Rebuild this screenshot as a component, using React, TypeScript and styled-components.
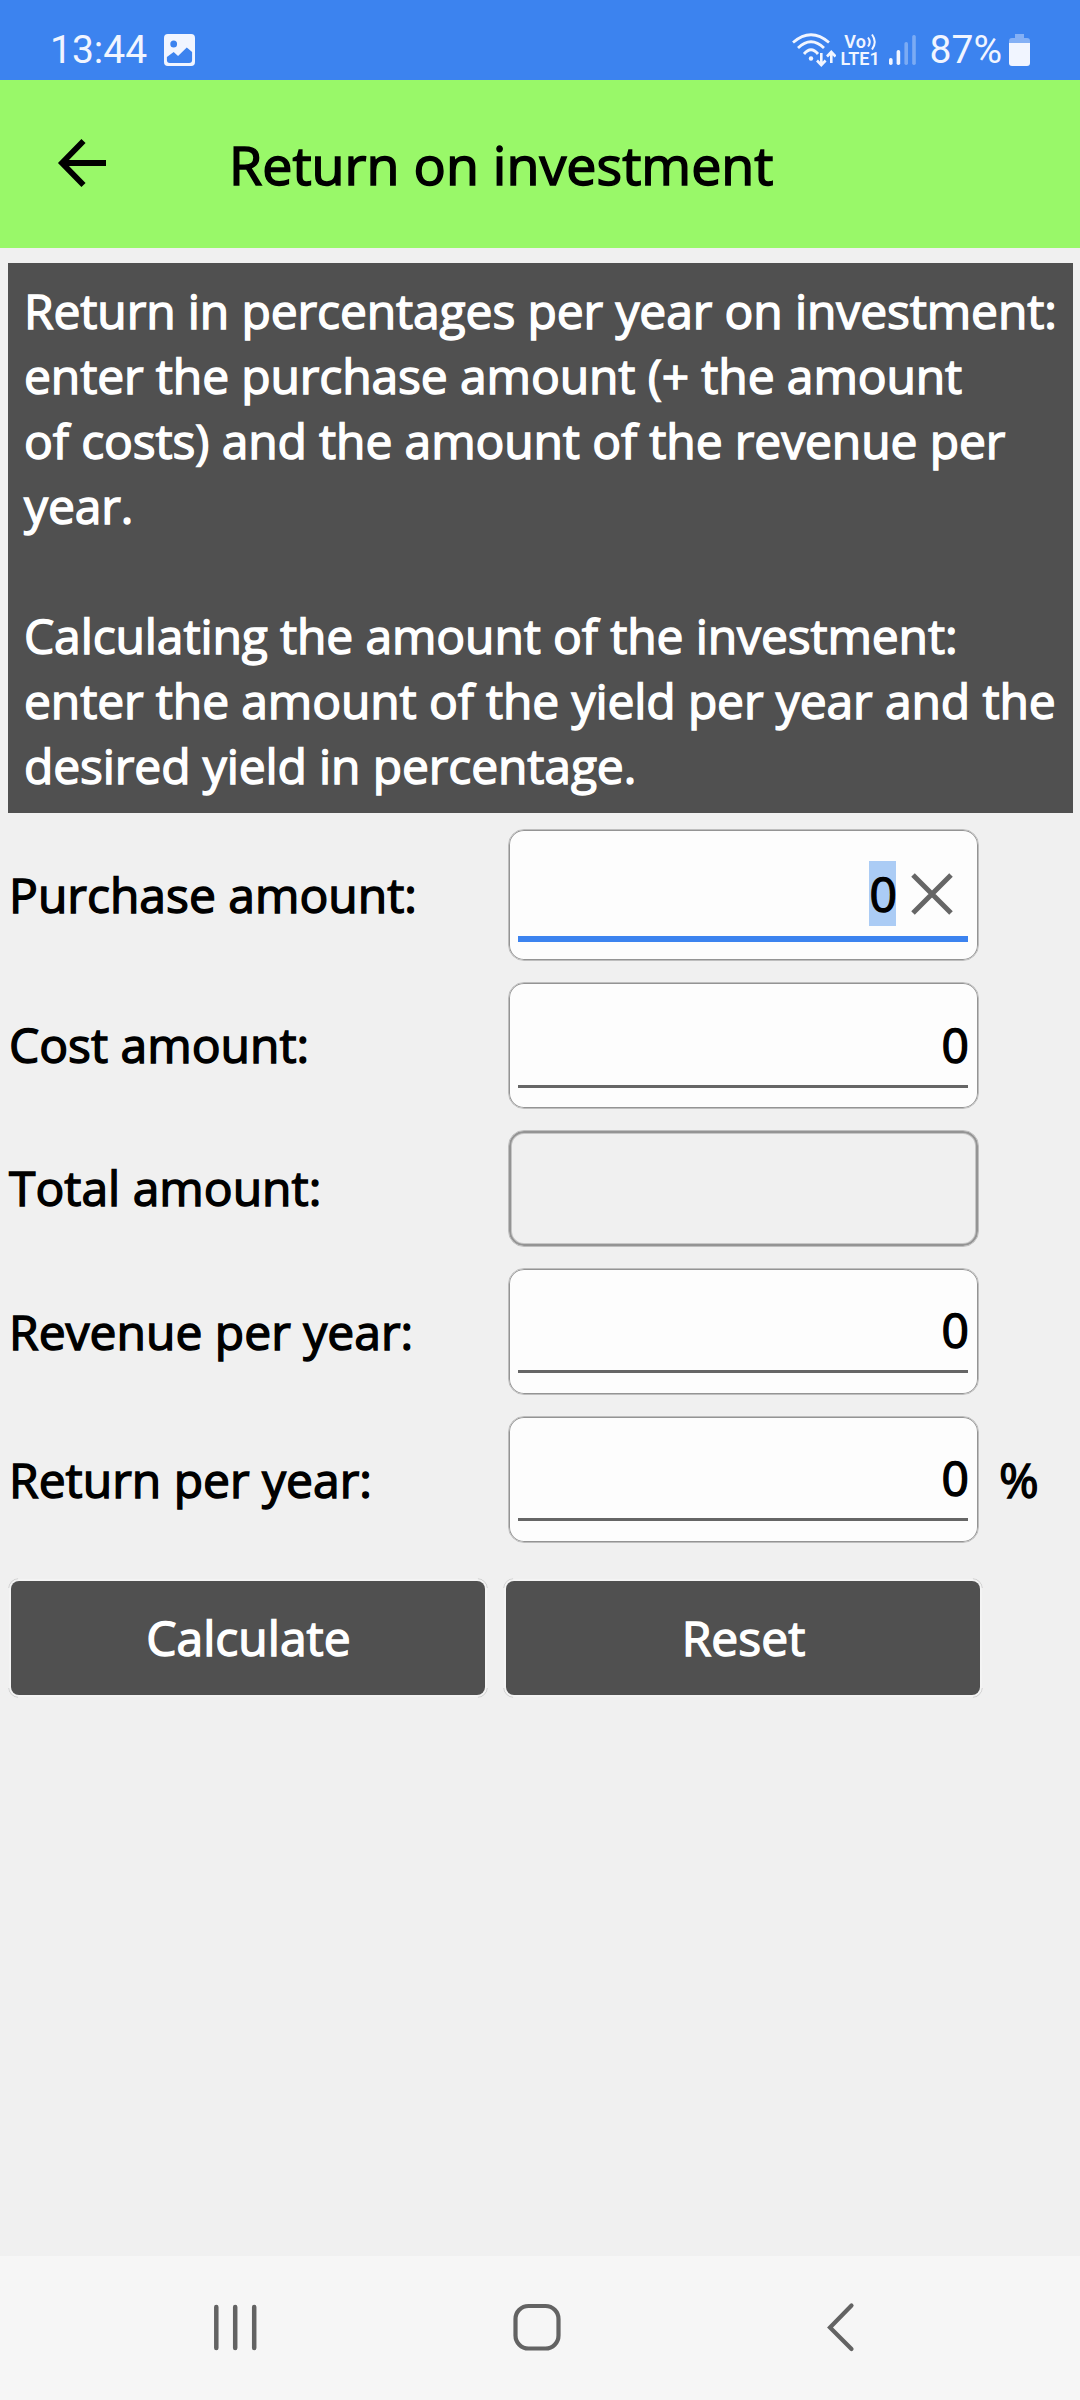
import React from "react";
import styled, { createGlobalStyle } from "styled-components";

const GlobalStyle = createGlobalStyle`
  * { box-sizing: border-box; }
  html, body { margin: 0; padding: 0; background: #f0f0f0; }
  body { font-family: "Open Sans", "Noto Sans", sans-serif; overflow: hidden; }
  button { font: inherit; border: 0; margin: 0; padding: 0; outline: 0; }
  svg { display: block; flex: none; }
`;

const Screen = styled.div`
  width: 1080px;
  height: 2400px;
  display: flex;
  flex-direction: column;
  background: #f0f0f0;
  color: #000;
`;

const StatusBar = styled.header`
  height: 80px;
  padding: 18px 50px 0 50px;
  display: flex;
  justify-content: space-between;
  background: #3c83ef;
  color: #f1f5ff;
  font-family: Roboto, sans-serif;
  font-weight: 400;
`;

const StatusGroup = styled.div`
  height: 63px;
  display: flex;
  align-items: center;
`;

const StatusText = styled.span<{ $gap: number }>`
  font-size: 39px;
  line-height: 62px;
  margin-right: ${(p) => p.$gap}px;
`;

const Carrier = styled.div`
  width: 39px;
  margin: 0 9px 0 5px;
  display: flex;
  flex-direction: column;
  align-items: center;
  font-weight: 600;
  font-size: 18px;
  line-height: 17px;
`;

const CarrierTop = styled.div`
  display: flex;
  align-items: center;
  gap: 1px;
`;

const TitleBar = styled.div`
  height: 168px;
  padding-left: 54px;
  display: flex;
  align-items: center;
  background: #99f869;
`;

const BackButton = styled.button`
  width: 56px;
  height: 56px;
  margin: 0 119px 2px 0;
  background: none;
  color: inherit;
`;

const Title = styled.h1`
  margin: 0;
  font-size: 53.8px;
  line-height: 72px;
  font-weight: 400;
  white-space: nowrap;
  -webkit-text-stroke: 1.5px currentColor;
`;

const Content = styled.main`
  flex: 1;
  padding: 15px 7px 0 8px;
  display: flex;
  flex-direction: column;
  font-size: 48px;
  -webkit-text-stroke: 1.4px currentColor;
`;

const Notice = styled.section`
  height: 550px;
  padding: 15px 0 0 16px;
  background: #505050;
  color: #fff;
  line-height: 65px;
  letter-spacing: -0.12px;
  white-space: pre;
`;

const Form = styled.form`
  margin-top: 16px;
  display: flex;
  flex-direction: column;
  gap: 21px;
`;

const Row = styled.div<{ $height: number }>`
  height: ${(p) => p.$height}px;
  display: flex;
  align-items: center;
`;

const Label = styled.label<{ $raised?: boolean }>`
  width: 500px;
  padding: 0 0 ${(p) => (p.$raised ? 2 : 0)}px 1px;
  line-height: 66px;
  white-space: nowrap;
`;

const Field = styled.div<{ $readOnly?: boolean }>`
  width: 471px;
  height: 100%;
  padding: 0 10px 0 9px;
  display: flex;
  flex-direction: column;
  justify-content: flex-end;
  border: 1px solid #bebebe;
  border-radius: 16px;
  background: ${(p) => (p.$readOnly ? "#f0f0f0" : "#fdfdfd")};
  box-shadow: ${(p) =>
    p.$readOnly ? "inset 0 0 0 2px #949494, inset 0 0 0 3px #c6c6c6" : "inset 0 0 0 1px #949494"};
`;

const ValueLine = styled.div<{ $focused?: boolean; $lift: number }>`
  display: flex;
  justify-content: flex-end;
  padding-bottom: ${(p) => (p.$focused ? 10 : 8)}px;
  margin-bottom: ${(p) => p.$lift}px;
  border-bottom: ${(p) => (p.$focused ? "6px solid #3c83ef" : "3px solid #666")};
`;

const Value = styled.span<{ $selected?: boolean }>`
  width: 27px;
  line-height: 65px;
  text-indent: 0.5px;
  background: ${(p) => (p.$selected ? "#abccf5" : "transparent")};
`;

const ClearButton = styled.button`
  width: 72px;
  height: 65px;
  padding: 12px 0 0 15px;
  display: flex;
  align-items: flex-start;
  background: none;
  color: #666;
`;

const Unit = styled.span`
  margin-left: 20px;
  line-height: 66px;
`;

const Actions = styled.div`
  margin: 17px 0 0 3px;
  display: flex;
  gap: 21px;
`;

const Action = styled.button`
  position: relative;
  width: 474px;
  height: 114px;
  padding-left: 1px;
  border-radius: 8px;
  background: #505050;
  color: #fff;
  line-height: 66px;
  box-shadow: 0 0 0 2px #f4f4f4;

  &::before {
    content: "";
    position: absolute;
    inset: -3px;
    border: 1px solid #cfcfcf;
    border-radius: 11px;
    mask-image: linear-gradient(90deg, #000 10px, transparent 10px calc(100% - 10px), #000 0),
      linear-gradient(#000 10px, transparent 10px calc(100% - 10px), #000 0);
    mask-composite: intersect;
  }
`;

const NavBar = styled.nav`
  height: 144px;
  padding: 0 0 2px 213px;
  display: flex;
  align-items: center;
  background: #f6f6f6;
  color: #636363;
`;

const NavButton = styled.button<{ $gap: number }>`
  margin-right: ${(p) => p.$gap}px;
  background: none;
  color: inherit;
`;

const PictureIcon = () => (
  <svg width="31" height="32" viewBox="0 0 32 32" preserveAspectRatio="none">
    <path
      fillRule="evenodd"
      fill="currentColor"
      d="M4 0h24a4 4 0 0 1 4 4v24a4 4 0 0 1-4 4H4a4 4 0 0 1-4-4V4a4 4 0 0 1 4-4zM10 6.500a3.500 3.500 0 1 0 0 7a3.500 3.500 0 0 0 0-7zM3 23v3a3 3 0 0 0 3 3h20a3 3 0 0 0 3-3v-8l-5.500-4.500l-9 8.500l-4.500-4z"
    />
  </svg>
);

const WifiIcon = () => (
  <svg width="44" height="34" viewBox="0 0 44 34" fill="none" stroke="currentColor" strokeWidth="2.800">
    <path d="M1 9.500Q19 -6 37 9.500M6 15Q19 2.500 32 15M12 21Q19 12.500 26 21" />
    <circle cx="19" cy="25.500" r="2.200" fill="currentColor" stroke="none" />
    <path strokeWidth="2.600" d="M29.300 20v12M25 27.500l4.300 4.500l4.300-4.500M39.300 30v-11M35 23.500l4.300-4.500l4.300 4.500" />
  </svg>
);

const VoiceWaves = () => (
  <svg width="9" height="17" viewBox="0 0 9 17" fill="none" stroke="currentColor" strokeWidth="2">
    <path d="M1 4.500Q4.500 9 1 13.500M5 1.500Q10.500 9 5 16.500" />
  </svg>
);

const SignalIcon = () => (
  <svg width="41" height="30" viewBox="0 0 41 30" fill="currentColor">
    <rect y="23" width="3.600" height="7" rx="1.700" />
    <rect x="7.600" y="15" width="3.600" height="15" rx="1.700" />
    <rect x="15.400" y="7" width="3.600" height="23" rx="1.700" opacity=".35" />
    <rect x="23.200" y="0" width="3.600" height="30" rx="1.700" opacity=".35" />
  </svg>
);

const BatteryIcon = () => (
  <svg width="21" height="32" viewBox="0 0 21 32" fill="currentColor">
    <path opacity=".4" d="M6 0h9v4h3a3 3 0 0 1 3 3v2H0V7a3 3 0 0 1 3-3h3z" />
    <path d="M0 9h21v20a3 3 0 0 1-3 3H3a3 3 0 0 1-3-3z" />
  </svg>
);

const BackArrow = () => (
  <svg width="56" height="56" viewBox="0 0 56 56" fill="none" stroke="currentColor" strokeWidth="5.800">
    <path d="M29.500 6L8 28l21.500 22M8.500 28h43.500" />
  </svg>
);

const ClearIcon = () => (
  <svg width="42" height="42" viewBox="0 0 42 42" fill="none" stroke="currentColor" strokeWidth="5">
    <path d="M2 2l38 38M40 2L2 40" />
  </svg>
);

const RecentsIcon = () => (
  <svg width="44" height="48" viewBox="0 0 44 48" stroke="currentColor" strokeWidth="4.500" strokeLinecap="round">
    <path d="M3.300 4v41M22.200 4v41M41.200 4v41" />
  </svg>
);

const HomeIcon = () => (
  <svg width="48" height="48" viewBox="0 0 48 48" fill="none" stroke="currentColor" strokeWidth="4.200">
    <rect x="2.500" y="3" width="43" height="42.500" rx="13" />
  </svg>
);

const NavBackIcon = () => (
  <svg width="30" height="50" viewBox="0 0 30 50" fill="none" stroke="currentColor" strokeWidth="4.200" strokeLinecap="round">
    <path d="M25.500 3.500L4 25.500L25.500 47" />
  </svg>
);

type RowSpec = {
  label: string;
  height: number;
  lift: number;
  raised?: boolean;
  value?: string;
  focused?: boolean;
  unit?: string;
};

const rows: RowSpec[] = [
  { label: "Purchase amount:", height: 132, lift: 18, value: "0", focused: true },
  { label: "Cost amount:", height: 127, lift: 20, value: "0", raised: true },
  { label: "Total amount:", height: 117, lift: 0, raised: true },
  { label: "Revenue per year:", height: 127, lift: 21, value: "0" },
  { label: "Return per year:", height: 127, lift: 21, value: "0", unit: "%" },
];

const notice = `Return in percentages per year on investment:
enter the purchase amount (+ the amount
of costs) and the amount of the revenue per
year.

Calculating the amount of the investment:
enter the amount of the yield per year and the
desired yield in percentage.`;

export default function App() {
  return (
    <Screen>
      <GlobalStyle />
      <StatusBar>
        <StatusGroup>
          <StatusText $gap={17}>13:44</StatusText>
          <PictureIcon />
        </StatusGroup>
        <StatusGroup>
          <WifiIcon />
          <Carrier>
            <CarrierTop>
              Vo
              <VoiceWaves />
            </CarrierTop>
            <span>LTE1</span>
          </Carrier>
          <SignalIcon />
          <StatusText $gap={7}>87%</StatusText>
          <BatteryIcon />
        </StatusGroup>
      </StatusBar>
      <TitleBar>
        <BackButton aria-label="Back">
          <BackArrow />
        </BackButton>
        <Title>Return on investment</Title>
      </TitleBar>
      <Content>
        <Notice>{notice}</Notice>
        <Form>
          {rows.map((row) => (
            <Row key={row.label} $height={row.height}>
              <Label $raised={row.raised}>{row.label}</Label>
              <Field $readOnly={row.value === undefined}>
                {row.value !== undefined && (
                  <ValueLine $focused={row.focused} $lift={row.lift}>
                    <Value $selected={row.focused}>{row.value}</Value>
                    {row.focused && (
                      <ClearButton type="button" aria-label="Clear">
                        <ClearIcon />
                      </ClearButton>
                    )}
                  </ValueLine>
                )}
              </Field>
              {row.unit && <Unit>{row.unit}</Unit>}
            </Row>
          ))}
          <Actions>
            <Action type="button">Calculate</Action>
            <Action type="button">Reset</Action>
          </Actions>
        </Form>
      </Content>
      <NavBar>
        <NavButton $gap={256} aria-label="Recent apps">
          <RecentsIcon />
        </NavButton>
        <NavButton $gap={265} aria-label="Home">
          <HomeIcon />
        </NavButton>
        <NavButton $gap={0} aria-label="Back">
          <NavBackIcon />
        </NavButton>
      </NavBar>
    </Screen>
  );
}
